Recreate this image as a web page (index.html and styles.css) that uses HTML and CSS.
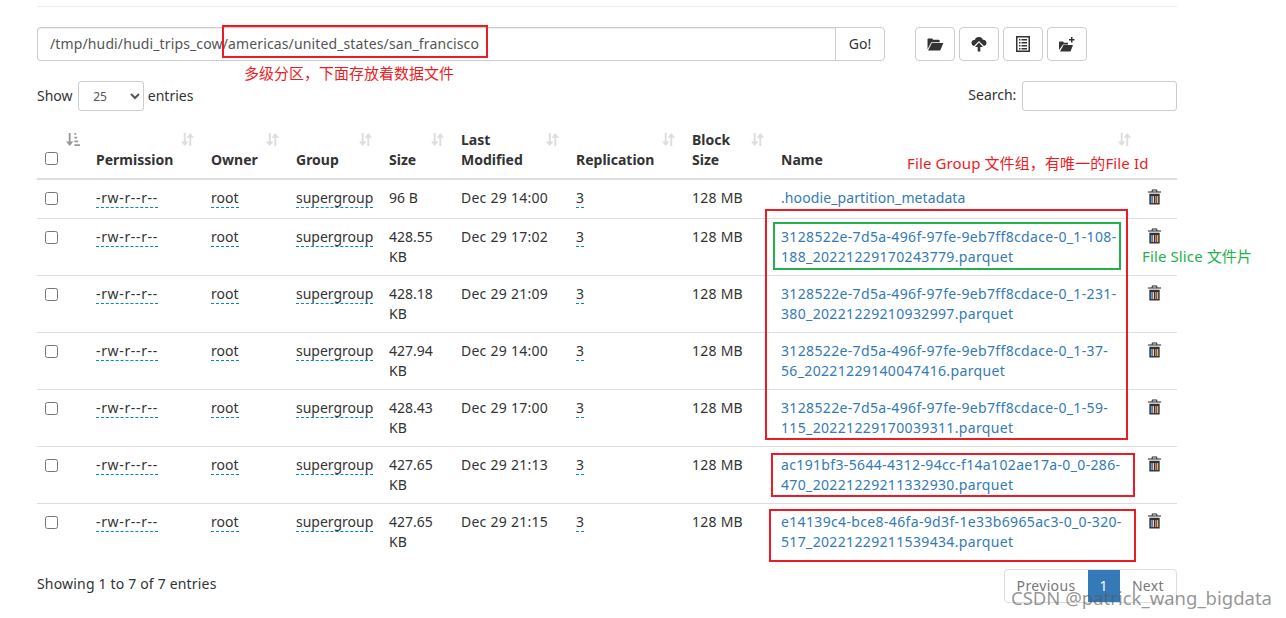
FILE: index.html

```html
<!DOCTYPE html>
<html lang="zh-CN">
<head>
  <meta charset="UTF-8">
  <title>Browse Directory</title>
  <link rel="stylesheet" href="styles.css">
</head>
<body>
  <svg class="icon-defs" aria-hidden="true">
    <symbol id="i-sort" viewBox="0 0 16 16">
      <path d="M4 1h2v9h3l-4 5-4-5h3z"/>
      <path d="M11 1l4 5h-3v9h-2V6H7z"/>
    </symbol>
    <symbol id="i-sorted" viewBox="0 0 16 16">
      <path d="M4 1h2v9h3l-4 5-4-5h3z"/>
      <path d="M10 1h2v2h-2zM10 5h3v2h-3zM10 9h4v2h-4zM10 13h6v2h-6z"/>
    </symbol>
    <symbol id="i-trash" viewBox="0 0 16 16">
      <path d="M6 0h4a1 1 0 0 1 1 1v1h4v1.200H1V2h4V1a1 1 0 0 1 1-1zm0 1v1h4V1z" fill="#222"/>
      <path d="M2.500 4.500h11V16h-11z" fill="#333"/>
      <path d="M4 7h1.500v7.500H4z" fill="#5b9bd5"/>
      <path d="M6 7h1.500v7.500H6z" fill="#d9d9d9"/>
      <path d="M8.500 7H10v7.500H8.500z" fill="#c77f7f"/>
      <path d="M10.500 7H12v7.500h-1.500z" fill="#e3b26b"/>
    </symbol>
  </svg>

  <div class="container">
    <hr class="top-rule">

    <!-- path + toolbar -->
    <div class="path-row">
      <div class="input-group">
        <input class="path-input" type="text" value="/tmp/hudi/hudi_trips_cow/americas/united_states/san_francisco">
        <button class="btn go-btn">Go!</button>
      </div>
      <div class="toolbar">
        <button class="btn tool-btn">
          <svg width="18" height="14" viewBox="0 0 18 15"><path d="M1 13V2.500A1 1 0 0 1 2 1.500h4l1 1.500h6a1 1 0 0 1 1 1v1.500H5L1 13z"/><path d="M5.600 6.500H18L14.500 14.500H1.600z"/></svg>
        </button>
        <button class="btn tool-btn">
          <svg width="16" height="16" viewBox="0 0 16 16"><path d="M8 1a4 4 0 0 1 3.800 2.800A3.200 3.200 0 0 1 15.500 7a3 3 0 0 1-2.500 3L8 5 3 10a3 3 0 0 1-2.500-3 3 3 0 0 1 3.200-3A4.400 4.400 0 0 1 8 1z"/><path d="M8 6.500l4 4.500H9.300v4.500H6.700V11H4z"/></svg>
        </button>
        <button class="btn tool-btn">
          <svg width="14" height="16" viewBox="0 0 14 16"><path fill-rule="evenodd" d="M0 0h14v16H0zM1.500 1.500v13h11v-13z"/><path d="M3 3h1.500v1.500H3zM5.500 3H11v1.500H5.500zM3 6h1.500v1.500H3zM5.500 6H11v1.500H5.500zM3 9h1.500v1.500H3zM5.500 9H11v1.500H5.500zM3 12h1.500v1.500H3zM5.500 12H11v1.500H5.500z"/></svg>
        </button>
        <button class="btn tool-btn">
          <svg width="16" height="15" viewBox="0 0 16 15"><path d="M0 13V5.500a1 1 0 0 1 1-1h3l1 1.200h4V7.500H4L0 13z"/><path d="M4.500 8H14l-2.500 6.500H1z"/><path d="M12 0h1.500v2H15.500v1.500h-2v2H12v-2h-2V2h2z"/></svg>
        </button>
      </div>
    </div>

    <div class="length-row">
      <label class="length-label">Show
        <select class="length-select"><option>25</option></select>
        entries</label>
      <label class="search-label">Search: <input class="search-input" type="text"></label>
    </div>

    <table class="files">
      <colgroup>
        <col class="c-check"><col class="c-perm"><col class="c-owner"><col class="c-group"><col class="c-size">
        <col class="c-mod"><col class="c-rep"><col class="c-block"><col class="c-name"><col class="c-del">
      </colgroup>
      <thead>
        <tr>
          <th><input type="checkbox"><svg class="sort sort-active"><use href="#i-sorted"/></svg></th>
          <th>Permission<svg class="sort"><use href="#i-sort"/></svg></th>
          <th>Owner<svg class="sort"><use href="#i-sort"/></svg></th>
          <th>Group<svg class="sort"><use href="#i-sort"/></svg></th>
          <th>Size<svg class="sort"><use href="#i-sort"/></svg></th>
          <th>Last Modified<svg class="sort"><use href="#i-sort"/></svg></th>
          <th>Replication<svg class="sort"><use href="#i-sort"/></svg></th>
          <th>Block Size<svg class="sort"><use href="#i-sort"/></svg></th>
          <th>Name<svg class="sort"><use href="#i-sort"/></svg></th>
          <th></th>
        </tr>
      </thead>
      <tbody>
        <tr>
          <td><input type="checkbox"></td><td><span class="editable perm">-rw-r--r--</span></td><td><span class="editable">root</span></td><td><span class="editable">supergroup</span></td>
          <td>96 B</td><td class="wide">Dec 29 14:00</td><td><span class="editable">3</span></td><td class="wide">128 MB</td>
          <td><a class="meta-link" href="#">.hoodie_partition_metadata</a></td><td><svg class="trash"><use href="#i-trash"/></svg></td>
        </tr>
        <tr>
          <td><input type="checkbox"></td><td><span class="editable perm">-rw-r--r--</span></td><td><span class="editable">root</span></td><td><span class="editable">supergroup</span></td>
          <td>428.55 KB</td><td class="wide">Dec 29 17:02</td><td><span class="editable">3</span></td><td class="wide">128 MB</td>
          <td><a href="#">3128522e-7d5a-496f-97fe-9eb7ff8cdace-0_1-108-188_20221229170243779.parquet</a></td><td><svg class="trash"><use href="#i-trash"/></svg></td>
        </tr>
        <tr>
          <td><input type="checkbox"></td><td><span class="editable perm">-rw-r--r--</span></td><td><span class="editable">root</span></td><td><span class="editable">supergroup</span></td>
          <td>428.18 KB</td><td class="wide">Dec 29 21:09</td><td><span class="editable">3</span></td><td class="wide">128 MB</td>
          <td><a href="#">3128522e-7d5a-496f-97fe-9eb7ff8cdace-0_1-231-380_20221229210932997.parquet</a></td><td><svg class="trash"><use href="#i-trash"/></svg></td>
        </tr>
        <tr>
          <td><input type="checkbox"></td><td><span class="editable perm">-rw-r--r--</span></td><td><span class="editable">root</span></td><td><span class="editable">supergroup</span></td>
          <td>427.94 KB</td><td class="wide">Dec 29 14:00</td><td><span class="editable">3</span></td><td class="wide">128 MB</td>
          <td><a href="#">3128522e-7d5a-496f-97fe-9eb7ff8cdace-0_1-37-56_20221229140047416.parquet</a></td><td><svg class="trash"><use href="#i-trash"/></svg></td>
        </tr>
        <tr>
          <td><input type="checkbox"></td><td><span class="editable perm">-rw-r--r--</span></td><td><span class="editable">root</span></td><td><span class="editable">supergroup</span></td>
          <td>428.43 KB</td><td class="wide">Dec 29 17:00</td><td><span class="editable">3</span></td><td class="wide">128 MB</td>
          <td><a href="#">3128522e-7d5a-496f-97fe-9eb7ff8cdace-0_1-59-115_20221229170039311.parquet</a></td><td><svg class="trash"><use href="#i-trash"/></svg></td>
        </tr>
        <tr>
          <td><input type="checkbox"></td><td><span class="editable perm">-rw-r--r--</span></td><td><span class="editable">root</span></td><td><span class="editable">supergroup</span></td>
          <td>427.65 KB</td><td class="wide">Dec 29 21:13</td><td><span class="editable">3</span></td><td class="wide">128 MB</td>
          <td><a href="#">ac191bf3-5644-4312-94cc-f14a102ae17a-0_0-286-470_20221229211332930.parquet</a></td><td><svg class="trash"><use href="#i-trash"/></svg></td>
        </tr>
        <tr>
          <td><input type="checkbox"></td><td><span class="editable perm">-rw-r--r--</span></td><td><span class="editable">root</span></td><td><span class="editable">supergroup</span></td>
          <td>427.65 KB</td><td class="wide">Dec 29 21:15</td><td><span class="editable">3</span></td><td class="wide">128 MB</td>
          <td><a href="#">e14139c4-bce8-46fa-9d3f-1e33b6965ac3-0_0-320-517_20221229211539434.parquet</a></td><td><svg class="trash"><use href="#i-trash"/></svg></td>
        </tr>
      </tbody>
    </table>

    <div class="table-footer">
      <div class="table-info">Showing 1 to 7 of 7 entries</div>
      <div class="pagination">
        <a class="page-item" href="#">Previous</a>
        <a class="page-item current" href="#">1</a>
        <a class="page-item" href="#">Next</a>
      </div>
    </div>
  </div>

  <!-- screenshot markup on top of the page -->
  <div class="mark mark-path"></div>
  <div class="mark mark-group"></div>
  <div class="mark mark-slice"></div>
  <div class="mark mark-g2"></div>
  <div class="mark mark-g3"></div>
  <div class="note note-path">多级分区，下面存放着数据文件</div>
  <div class="note note-group">File Group 文件组，有唯一的File Id</div>
  <div class="note note-slice">File Slice 文件片</div>
  <div class="watermark">CSDN @patrick_wang_bigdata</div>
</body>
</html>
```

FILE: styles.css

```css
html, body {
  height: 618px;
  overflow: hidden;
}
body {
  margin: 0;
  background: #fff;
  color: #333;
  font-family: "Noto Sans", "Noto Sans CJK SC", sans-serif;
  font-size: 14px;
  line-height: 20px;
}
.icon-defs {
  position: absolute;
  width: 0;
  height: 0;
}
.container {
  width: 1140px;
  margin-left: 37px;
}
.top-rule {
  border: none;
  border-top: 1px solid #eee;
  margin: 6px 0 0;
}

/* path + toolbar */
.path-row {
  display: flex;
  margin-top: 20px;
}
.input-group {
  display: flex;
  width: 848px;
  height: 34px;
}
.path-input {
  flex: 1;
  min-width: 0;
  box-sizing: border-box;
  padding: 6px 12px;
  border: 1px solid #ccc;
  border-right: none;
  border-radius: 4px 0 0 4px;
  box-shadow: inset 0 1px 1px rgba(0, 0, 0, 0.075);
  color: #555;
  font: inherit;
  letter-spacing: 0.13px;
}
.btn {
  box-sizing: border-box;
  background: #fff;
  border: 1px solid #ccc;
  border-radius: 4px;
  color: #333;
  font: inherit;
  padding: 0;
}
.go-btn {
  width: 50px;
  border-radius: 0 4px 4px 0;
}
.toolbar {
  display: flex;
  gap: 4px;
  margin-left: 30px;
}
.tool-btn {
  display: flex;
  align-items: center;
  justify-content: center;
  width: 40px;
  height: 34px;
}
.tool-btn svg {
  fill: #333;
}

/* length + search */
.length-row {
  display: flex;
  justify-content: space-between;
  margin-top: 20px;
  height: 30px;
}
.length-select {
  width: 66px;
  height: 30px;
  margin: 0 0 0 2px;
  padding: 5px 10px;
  background-color: #fff;
  border: 1px solid #ccc;
  border-radius: 3px;
  color: #555;
  font: 12px "Noto Sans", sans-serif;
}
.search-input {
  box-sizing: border-box;
  width: 155px;
  height: 30px;
  margin-left: 2px;
  border: 1px solid #ccc;
  border-radius: 3px;
  vertical-align: middle;
}

/* table */
.files {
  width: 1140px;
  margin-top: 11px;
  table-layout: fixed;
  border-collapse: collapse;
}
.c-check { width: 51px; }
.c-perm { width: 115px; }
.c-owner { width: 85px; }
.c-group { width: 93px; }
.c-size { width: 72px; }
.c-mod { width: 115px; }
.c-rep { width: 116px; }
.c-block { width: 89px; }
.c-name { width: 367px; }
.c-del { width: 37px; }
.files th {
  position: relative;
  padding: 8px 28px 8px 8px;
  text-align: left;
  vertical-align: bottom;
  font-weight: 700;
  border-bottom: 2px solid #ddd;
}
.files td {
  padding: 8px;
  vertical-align: top;
  border-top: 1px solid #ddd;
}
.files tbody tr:first-child td {
  border-top: none;
}
.files input[type="checkbox"] {
  display: block;
  margin: 4px 0 0;
}
.files th input[type="checkbox"] {
  margin: 0 0 5px;
}
.files td:last-child {
  padding-left: 7px;
}
.sort {
  position: absolute;
  top: 10px;
  right: 8px;
  width: 15px;
  height: 15px;
  fill: #ddd;
}
.sort-active {
  fill: #999;
}
.editable {
  border-bottom: 1px dashed #08c;
}
.perm {
  letter-spacing: 0.65px;
}
.wide {
  letter-spacing: 0.25px;
}
.files a {
  color: #337ab7;
  text-decoration: none;
  letter-spacing: 0.35px;
}
.files a.meta-link {
  letter-spacing: 0.1px;
}
.trash {
  display: block;
  width: 15px;
  height: 16px;
  margin: 1px 0 5px;
}

/* footer */
.table-footer {
  display: flex;
  justify-content: space-between;
  align-items: flex-start;
  margin-top: 9px;
}
.table-info {
  padding-top: 5px;
  letter-spacing: 0.18px;
}
.pagination {
  display: flex;
  height: 34px;
  box-sizing: border-box;
  border: 1px solid #ddd;
  border-radius: 4px;
}
.page-item {
  padding: 6px 12px;
  color: #777;
  text-decoration: none;
  letter-spacing: 0.35px;
}
.page-item.current {
  background: #337ab7;
  color: #fff;
}

/* markup */
.mark {
  position: absolute;
  box-sizing: border-box;
  border: 2px solid #ed1c24;
}
.mark-path { left: 222px; top: 25px; width: 266px; height: 33px; }
.mark-group { left: 765px; top: 209px; width: 363px; height: 231px; }
.mark-slice { left: 773px; top: 222px; width: 348px; height: 48px; border-color: #22b14c; }
.mark-g2 { left: 771px; top: 453px; width: 364px; height: 44px; }
.mark-g3 { left: 769px; top: 509px; width: 367px; height: 53px; }
.note {
  position: absolute;
  color: #ed1c24;
  font-size: 15px;
  line-height: 20px;
  white-space: nowrap;
}
.note-path { left: 244px; top: 63px; }
.note-group { left: 907px; top: 153px; letter-spacing: 0.12px; }
.note-slice { left: 1142px; top: 246px; color: #22b14c; letter-spacing: 0.12px; }
.watermark {
  position: absolute;
  left: 1011px;
  top: 586px;
  color: rgba(90, 90, 90, 0.65);
  font-size: 18.5px;
  line-height: 24px;
  white-space: nowrap;
}
```
